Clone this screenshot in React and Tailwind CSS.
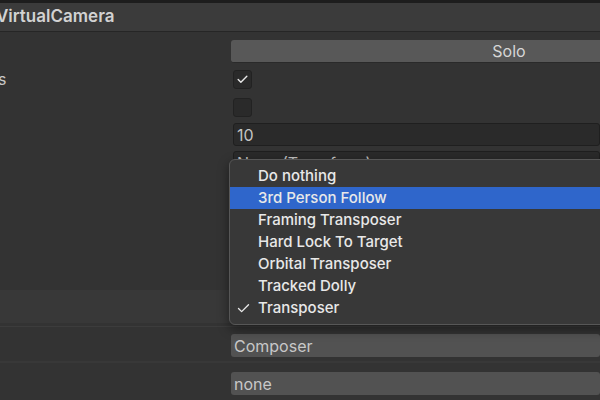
import {Check} from "lucide-react";

const options = [
    "Do nothing",
    "3rd Person Follow",
    "Framing Transposer",
    "Hard Lock To Target",
    "Orbital Transposer",
    "Tracked Dolly",
    "Transposer",
];

const Field = ({children, className = ""}) => (
    <div className={`h-[23px] rounded-[3px] px-[3px] flex items-center text-[16px] text-[#c4c4c4] ${className}`}>
        {children}
    </div>
);

const Dropdown = () => (
    <div
        className="absolute left-[229px] top-[159px] w-[400px] h-[166px] rounded-[6px] border border-[#575757] bg-[#383838] py-[5px] shadow-[0_4px_12px_rgba(0,0,0,0.45)]">
        {options.map((opt) => (
            <div
                key={opt}
                className={`relative h-[22px] flex items-center pl-[28px] text-[15px] font-medium text-[#e8e8e8] ${opt === "3rd Person Follow" ? "bg-[#2f66cb]" : ""}`}>
                {opt === "Transposer" && (
                    <Check size={15} strokeWidth={2.2} className="absolute left-[6px] top-[4px] text-[#e8e8e8]"/>
                )}
                {opt}
            </div>
        ))}
    </div>
);

export default function App() {
    return (
        <div
            className="relative w-[600px] h-[400px] overflow-hidden bg-[#333333]"
            style={{fontFamily: "Inter, 'Noto Sans', sans-serif"}}>
            <div className="h-[3px] bg-[#1d1d1d]"></div>
            <div className="h-[29px] bg-[#3b3b3b] border-b border-[#262626] flex items-center">
                <span className="-ml-[4px] text-[17px] font-semibold text-[#d2d2d2]">VirtualCamera</span>
            </div>

            <div className="pt-[8px] flex flex-col gap-[6px] pl-[231px]">
                <div className="h-[23px] w-[556px] rounded-[3px] bg-[#585858] border-b border-[#2a2a2a] flex items-center justify-center text-[16px] text-[#d6d6d6]">
                    Solo
                </div>
                <div className="relative h-[20px] flex items-center">
                    <span className="absolute -left-[233px] text-[16px] text-[#c8c8c8]">s</span>
                    <div className="ml-[2px] w-[19px] h-[19px] rounded-[3px] bg-[#2a2a2a] border border-[#222] flex items-center justify-center">
                        <Check size={13} strokeWidth={2.6} className="text-[#e8e8e8]"/>
                    </div>
                </div>
                <div className="h-[20px] flex items-center mt-[2px]">
                    <div className="ml-[2px] w-[19px] h-[19px] rounded-[3px] bg-[#2a2a2a] border border-[#222]"></div>
                </div>
                <Field className="ml-[2px] bg-[#2a2a2a] border border-[#1f1f1f] text-[#bdbdbd]">10</Field>
                <Field className="ml-[2px] bg-[#2a2a2a] border border-[#1f1f1f] -mt-[1px] text-[#9a9a9a]">None (Transform)</Field>
            </div>

            <div className="absolute left-0 right-0 top-[290px] h-[33px] bg-[#383838]"></div>
            <div className="absolute left-0 right-0 top-[326px] h-[1px] bg-[#3c3c3c]"></div>
            <div className="absolute left-0 right-0 top-[361px] h-[2px] bg-[#383838]"></div>

            <div className="absolute left-[231px] right-0 top-[334px] flex flex-col gap-[15px]">
                <Field className="bg-[#525252] text-[#c8c8c8]">Composer</Field>
                <Field className="bg-[#525252] text-[#c8c8c8]">none</Field>
            </div>

            <Dropdown/>
        </div>
    );
}
